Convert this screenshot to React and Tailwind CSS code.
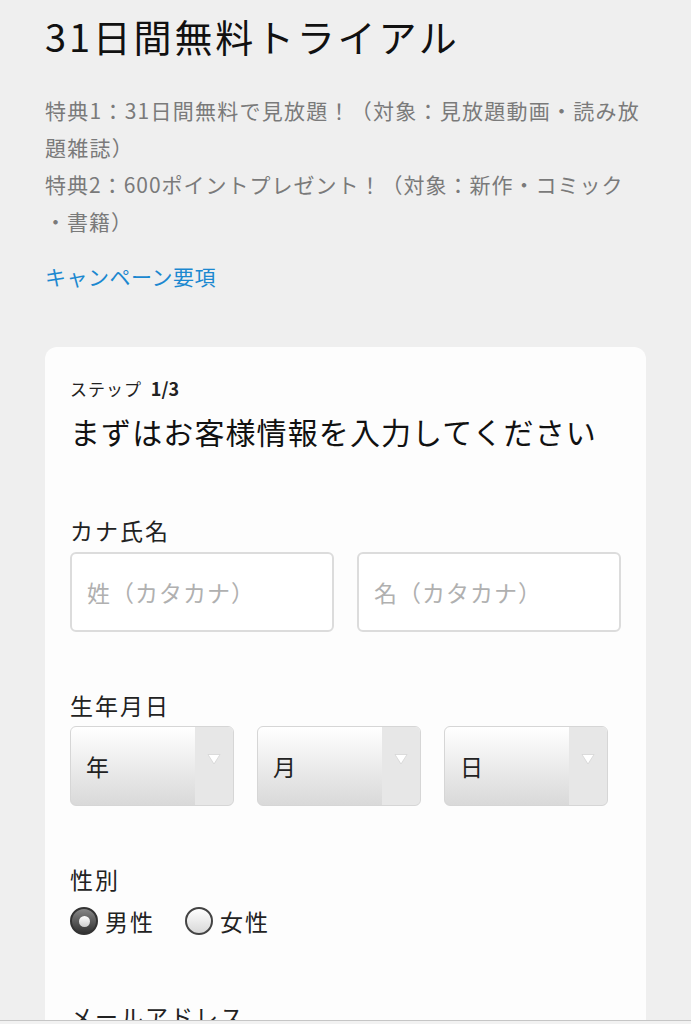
const font = { fontFamily: "'Noto Sans CJK JP', 'Noto Sans', sans-serif" };

function Select({ label }) {
  return (
    <div className="flex h-[80px] w-[164px] overflow-hidden rounded-[6px] border border-[#d6d6d6] bg-gradient-to-b from-white to-[#d9d9d9]">
      <div className="flex flex-1 items-center pl-[15px] text-[23px] text-[#222]">{label}</div>
      <div className="flex w-[38px] justify-center bg-[#e7e7e7] pt-[26px]">
        <svg width="14" height="12" viewBox="0 0 14 12">
          <path d="M1 1.5h12L7 11z" fill="#fff" stroke="#d4d4d4" strokeWidth="0.8" />
        </svg>
      </div>
    </div>
  );
}

function Radio({ checked, label }) {
  return (
    <label className="flex items-center gap-[7px]">
      {checked ? (
        <span className="flex h-[28px] w-[28px] items-center justify-center rounded-full border-2 border-[#333] bg-gradient-to-b from-[#888] to-[#333]">
          <span className="h-[11px] w-[11px] rounded-full bg-gradient-to-b from-white to-[#ccc]" />
        </span>
      ) : (
        <span className="h-[28px] w-[28px] rounded-full border-2 border-[#444] bg-gradient-to-b from-white to-[#d8d8d8]" />
      )}
      <span className="text-[23px] leading-[32px] tracking-[2px] text-[#222]">{label}</span>
    </label>
  );
}

export default function App() {
  return (
    <div className="min-h-[1024px] overflow-hidden bg-[#efefef] px-[45px] pt-[12px]" style={font}>
      <h1 className="text-[38px] leading-[48px] tracking-[2.8px] text-[#111]">31日間無料トライアル</h1>

      <div className="mt-[32px] text-[21px] leading-[37px] text-[#7a7a7a]">
        <p className="tracking-[1.25px]">特典1：31日間無料で見放題！（対象：見放題動画・読み放題雑誌）</p>
        <p className="tracking-[1px]">
          特典2：600ポイントプレゼント！（対象：新作・コミック
          <br />
          ・書籍）
        </p>
      </div>

      <a className="mt-[18px] block text-[21px] leading-[37px] tracking-[0.5px] text-[#1b88d0]">キャンペーン要項</a>

      <div className="mt-[52px] rounded-t-[12px] bg-[#fdfdfd] px-[25px] pb-[40px] pt-[29px] text-[#222]">
        <p className="text-[17px] leading-[24px] tracking-[1px]">
          ステップ <span className="ml-[4px] text-[18px] font-bold tracking-normal">1/3</span>
        </p>
        <h2 className="mt-[10px] text-[30px] leading-[40px] tracking-[1.1px] text-[#111]">まずはお客様情報を入力してください</h2>

        <p className="mt-[63px] text-[23px] leading-[32px] tracking-[2px]">カナ氏名</p>
        <div className="mt-[6px] grid grid-cols-2 gap-[23px]">
          <input
            className="h-[80px] rounded-[6px] border-2 border-[#dcdcdc] bg-white px-[15px] text-[23px] tracking-[1px] placeholder:text-[#b0b0b0]"
            placeholder="姓（カタカナ）"
            style={font}
          />
          <input
            className="h-[80px] rounded-[6px] border-2 border-[#dcdcdc] bg-white px-[15px] text-[23px] tracking-[1px] placeholder:text-[#b0b0b0]"
            placeholder="名（カタカナ）"
            style={font}
          />
        </div>

        <p className="mt-[57px] text-[23px] leading-[32px] tracking-[2px]">生年月日</p>
        <div className="mt-[5px] flex gap-[23px]">
          <Select label="年" />
          <Select label="月" />
          <Select label="日" />
        </div>

        <p className="mt-[57px] text-[23px] leading-[32px] tracking-[2px]">性別</p>
        <div className="mt-[10px] flex gap-[30px]">
          <Radio checked label="男性" />
          <Radio label="女性" />
        </div>

        <p className="mt-[63px] text-[23px] leading-[32px] tracking-[2px]">メールアドレス</p>
      </div>

      <div className="fixed inset-x-0 bottom-0 h-[4px] border-t border-[#c6c6c6] bg-[#f2f2f2]" />
    </div>
  );
}
